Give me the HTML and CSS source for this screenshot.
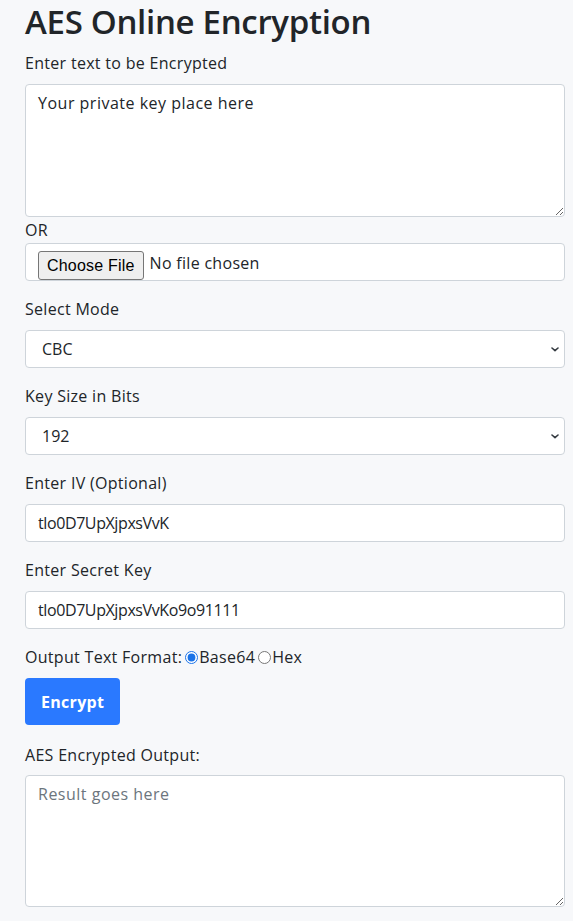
FILE: index.html
```html
<!DOCTYPE html>
<html lang="en">
<head>
<meta charset="utf-8">
<title>AES Online Encryption</title>
<link rel="stylesheet" href="styles.css">
</head>
<body>
<main class="page">
  <h1 class="title">AES Online Encryption</h1>

  <section class="group">
    <label class="label" for="plain">Enter text to be Encrypted</label>
    <textarea id="plain" class="control area">Your private key place here</textarea>
    <div class="label or">OR</div>
    <input type="file" class="control file">
  </section>

  <section class="group">
    <label class="label" for="mode">Select Mode</label>
    <select id="mode" class="control select">
      <option>CBC</option>
      <option>ECB</option>
    </select>
  </section>

  <section class="group">
    <label class="label" for="size">Key Size in Bits</label>
    <select id="size" class="control select">
      <option>128</option>
      <option selected>192</option>
      <option>256</option>
    </select>
  </section>

  <section class="group">
    <label class="label" for="iv">Enter IV (Optional)</label>
    <input id="iv" type="text" class="control input" value="tlo0D7UpXjpxsVvK">
  </section>

  <section class="group">
    <label class="label" for="key">Enter Secret Key</label>
    <input id="key" type="text" class="control input" value="tlo0D7UpXjpxsVvKo9o91111">
  </section>

  <div class="format">
    <span>Output Text Format:</span><input type="radio" name="fmt" id="b64" class="radio" checked><label for="b64">Base64</label> <input type="radio" name="fmt" id="hex" class="radio"><label for="hex">Hex</label>
  </div>

  <div class="actions">
    <button type="button" class="btn">Encrypt</button>
  </div>

  <section class="group">
    <label class="label label-out" for="out">AES Encrypted Output:</label>
    <textarea id="out" class="control area out" placeholder="Result goes here"></textarea>
  </section>
</main>
</body>
</html>
```
FILE: styles.css
```css
* { box-sizing: border-box; }

html, body {
  margin: 0;
  padding: 0;
  background: #f7f8fa;
}

body {
  font-family: "Open Sans", "DejaVu Sans", sans-serif;
  font-size: 16px;
  line-height: 24px;
  letter-spacing: 0.3px;
  color: #212529;
}

.page {
  width: 540px;
  margin-left: 25px;
  display: flex;
  flex-direction: column;
}

.title {
  margin: 2px 0 9px;
  font-size: 33px;
  line-height: 40px;
  font-weight: 600;
  letter-spacing: -0.3px;
  color: #212529;
}

.group {
  display: flex;
  flex-direction: column;
  margin-bottom: 16px;
}

.label {
  display: block;
  margin-bottom: 9px;
  font-size: 16px;
  line-height: 24px;
}

.label.or {
  margin-top: 1px;
  margin-bottom: 1px;
}

.label.label-out {
  margin-bottom: 8px;
}

.control {
  width: 100%;
  margin: 0;
  font-family: inherit;
  font-size: 16px;
  line-height: 24px;
  letter-spacing: 0;
  color: #212529;
  background-color: #fff;
  border: 1px solid #ced4da;
  border-radius: 4px;
  outline: none;
}

.area {
  display: block;
  height: 133px;
  padding: 6px 12px;
  letter-spacing: 0.5px;
  resize: vertical;
}

.out {
  height: 132px;
}

.out::placeholder {
  color: #6c757d;
  opacity: 1;
}

.file {
  height: 38px;
  padding: 7px 9px 0 12px;
  letter-spacing: 0.3px;
  color: #212529;
}

.file::file-selector-button {
  height: 29px;
  margin: 0 6px 0 0;
  padding: 0 8px;
  font-family: "Liberation Sans", Arial, sans-serif;
  font-size: 16px;
  letter-spacing: 0.2px;
  color: #000;
  background: #efefef;
  border: 1px solid #767676;
  border-radius: 3px;
  vertical-align: top;
}

.select {
  height: 38px;
  padding: 0 30px 0 16px;
  appearance: none;
  -webkit-appearance: none;
  background-image: url("data:image/svg+xml,%3Csvg xmlns='http://www.w3.org/2000/svg' viewBox='0 0 8 5'%3E%3Cpath d='M1 1l3 2.6L7 1' fill='none' stroke='%23343a40' stroke-width='1.6' stroke-linecap='round' stroke-linejoin='round'/%3E%3C/svg%3E");
  background-repeat: no-repeat;
  background-position: right 5px center;
  background-size: 8px 5px;
}

.input {
  height: 38px;
  padding: 0 12px;
  letter-spacing: -0.4px;
}

.format {
  display: flex;
  align-items: center;
  height: 24px;
  margin-bottom: 9px;
  white-space: pre;
}

.radio {
  width: 13px;
  height: 13px;
  margin: 0 1px 0 3px;
  accent-color: #1a73e8;
}

.actions {
  display: flex;
  margin-bottom: 18px;
}

.btn {
  height: 47px;
  padding: 0 16px;
  font-family: inherit;
  font-size: 16px;
  font-weight: 700;
  letter-spacing: 0.3px;
  color: #fff;
  background: #2a79ff;
  border: none;
  border-radius: 4px;
}
```
